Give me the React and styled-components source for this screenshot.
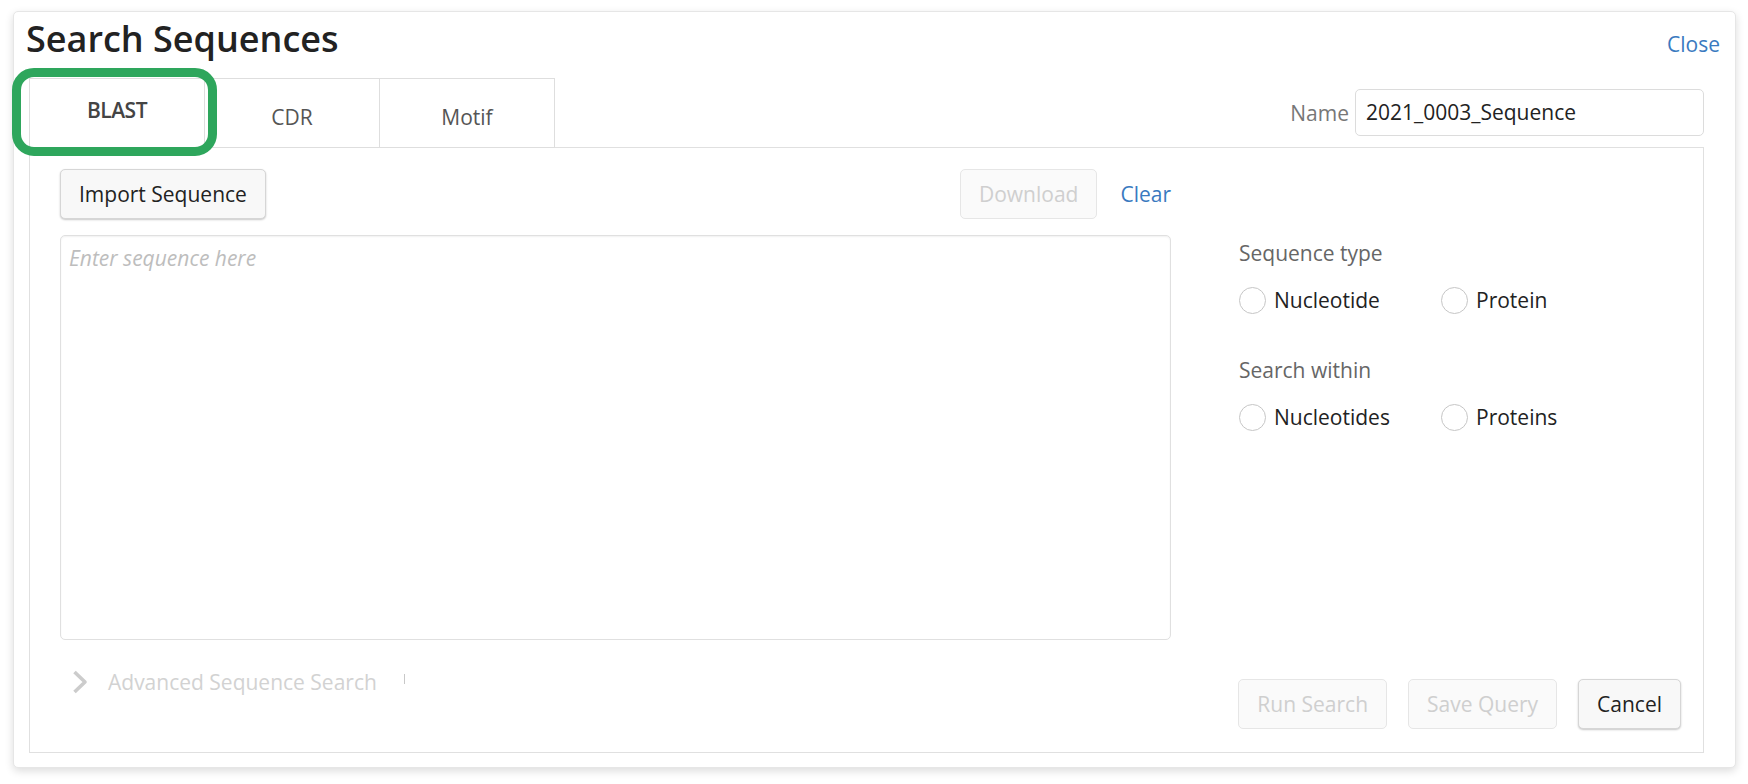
import React from "react";
import styled, { createGlobalStyle } from "styled-components";

const GlobalStyle = createGlobalStyle`
  html, body { margin: 0; padding: 0; background: #fff; }
  body { font-family: "Open Sans", "Noto Sans", sans-serif; color: #222; }
  * { box-sizing: border-box; }
`;

const Page = styled.div`
  padding: 11px 12px 16px 13px;
`;

const Card = styled.div`
  position: relative;
  height: 757px;
  border: 1px solid #e6e6e6;
  border-radius: 5px;
  background: #fff;
  box-shadow: 0 3px 8px rgba(0, 0, 0, 0.14);
  padding: 6px 15px 0 15px;
  display: flex;
  flex-direction: column;
`;

const Header = styled.div`
  display: flex;
  justify-content: space-between;
  align-items: baseline;
`;

const Title = styled.h1`
  margin: 0 0 0 -3px;
  font-size: 36px;
  line-height: 42px;
  font-weight: 600;
  color: #222;
`;

const LinkButton = styled.a`
  font-size: 21px;
  line-height: 28px;
  color: #3a7abf;
  cursor: pointer;
  text-decoration: none;
  white-space: nowrap;
`;

const TabRow = styled.div`
  display: flex;
  align-items: flex-end;
  margin-top: 18px;
  margin-right: 16px;
  margin-bottom: -1px;
  position: relative;
  z-index: 1;
`;

const Tab = styled.div`
  position: relative;
  z-index: ${(p) => (p.$active ? 2 : 1)};
  width: 176px;
  height: 70px;
  margin-left: ${(p) => (p.$first ? "0" : "-1px")};
  border: 1px solid #dedede;
  border-bottom-color: ${(p) => (p.$active ? "#fff" : "#dedede")};
  background: #fff;
  display: flex;
  align-items: center;
  justify-content: center;
  padding: ${(p) => (p.$active ? "0 0 7px 0" : "7px 0 0 0")};
  font-size: 21px;
  font-weight: ${(p) => (p.$active ? 600 : 400)};
  letter-spacing: ${(p) => (p.$active ? "-0.5px" : "0")};
  color: ${(p) => (p.$active ? "#444" : "#555")};
  cursor: pointer;
`;

const Highlight = styled.span`
  position: absolute;
  left: -18px;
  top: -11px;
  width: 205px;
  height: 88px;
  border: 9px solid #2ea65c;
  border-radius: 22px;
  pointer-events: none;
`;

const Spacer = styled.div`
  flex: 1;
`;

const NameGroup = styled.div`
  display: flex;
  align-items: center;
  gap: 6px;
  margin-bottom: 12px;
`;

const NameLabel = styled.label`
  font-size: 21px;
  color: #777;
`;

const NameInput = styled.input`
  width: 349px;
  height: 47px;
  border: 1px solid #dcdcdc;
  border-radius: 5px;
  padding: 0 10px 2px;
  font-family: inherit;
  font-size: 21px;
  color: #222;
  outline: none;
`;

const Panel = styled.div`
  flex: 1;
  margin-right: 16px;
  margin-bottom: 14px;
  border: 1px solid #e0e0e0;
  display: flex;
  padding: 21px 22px 23px 30px;
`;

const LeftColumn = styled.div`
  width: 1111px;
  flex-shrink: 0;
  display: flex;
  flex-direction: column;
`;

const Toolbar = styled.div`
  display: flex;
  align-items: center;
  height: 50px;
`;

const Button = styled.button`
  flex-shrink: 0;
  height: 50px;
  padding: 0 18px;
  white-space: nowrap;
  border: 1px solid ${(p) => (p.disabled ? "#e6e6e6" : "#d6d6d6")};
  border-radius: 5px;
  background: ${(p) => (p.disabled ? "#fafafa" : "#f8f8f8")};
  color: ${(p) => (p.disabled ? "#cfcfcf" : "#222")};
  box-shadow: ${(p) => (p.disabled ? "none" : "0 1px 2px rgba(0,0,0,0.22)")};
  font-family: inherit;
  font-size: 21px;
  cursor: ${(p) => (p.disabled ? "default" : "pointer")};
  margin-left: ${(p) => (p.$pushRight ? "auto" : "0")};
`;

const ClearLink = styled(LinkButton)`
  margin-left: 23px;
`;

const SequenceArea = styled.textarea`
  margin-top: 16px;
  height: 405px;
  width: 100%;
  border: 1px solid #e0e0e0;
  border-radius: 5px;
  box-shadow: inset 0 1px 2px rgba(0, 0, 0, 0.06);
  padding: 8px 8px;
  font-family: inherit;
  font-size: 21px;
  line-height: 28px;
  resize: none;
  outline: none;
  &::placeholder {
    color: #bdbdbd;
    font-style: italic;
  }
`;

const Advanced = styled.div`
  margin-top: 28px;
  height: 28px;
  display: flex;
  align-items: center;
  padding-left: 12px;
  font-size: 21px;
  color: #d2d2d2;
`;

const AdvancedText = styled.span`
  margin-left: 20px;
`;

const InfoMark = styled.span`
  width: 1px;
  height: 10px;
  background: #c8c8c8;
  margin-left: 27px;
  margin-bottom: 6px;
`;

const RightColumn = styled.div`
  flex: 1;
  min-width: 0;
  margin-left: 68px;
  display: flex;
  flex-direction: column;
`;

const FieldLabel = styled.div`
  margin-top: ${(p) => p.$top}px;
  font-size: 21px;
  line-height: 28px;
  color: #666;
`;

const RadioRow = styled.div`
  margin-top: 19px;
  height: 28px;
  display: flex;
  align-items: center;
`;

const RadioOption = styled.label`
  width: 202px;
  display: flex;
  align-items: center;
  gap: 8px;
  font-size: 21px;
  color: #222;
  cursor: pointer;
`;

const RadioCircle = styled.span`
  width: 27px;
  height: 27px;
  border: 1px solid #c6c6c6;
  border-radius: 50%;
  background: #fff;
`;

const Footer = styled.div`
  margin-top: auto;
  display: flex;
  justify-content: flex-end;
  gap: 21px;
`;

const Radio = ({ children }) => (
  <RadioOption>
    <RadioCircle />
    {children}
  </RadioOption>
);

export default function App() {
  return (
    <Page>
      <GlobalStyle />
      <Card>
        <Header>
          <Title>Search Sequences</Title>
          <LinkButton>Close</LinkButton>
        </Header>
        <TabRow>
          <Tab $first $active>
            BLAST
            <Highlight />
          </Tab>
          <Tab>CDR</Tab>
          <Tab>Motif</Tab>
          <Spacer />
          <NameGroup>
            <NameLabel>Name</NameLabel>
            <NameInput defaultValue="2021_0003_Sequence" />
          </NameGroup>
        </TabRow>
        <Panel>
          <LeftColumn>
            <Toolbar>
              <Button>Import Sequence</Button>
              <Button disabled $pushRight>
                Download
              </Button>
              <ClearLink>Clear</ClearLink>
            </Toolbar>
            <SequenceArea placeholder="Enter sequence here" />
            <Advanced>
              <svg width="16" height="24" viewBox="0 0 16 24">
                <path
                  d="M2.5 2 L13 12 L2.5 22"
                  fill="none"
                  stroke="#cccccc"
                  strokeWidth="3.6"
                  strokeLinejoin="round"
                />
              </svg>
              <AdvancedText>Advanced Sequence Search</AdvancedText>
              <InfoMark />
            </Advanced>
          </LeftColumn>
          <RightColumn>
            <FieldLabel $top={70}>Sequence type</FieldLabel>
            <RadioRow>
              <Radio>Nucleotide</Radio>
              <Radio>Protein</Radio>
            </RadioRow>
            <FieldLabel $top={42}>Search within</FieldLabel>
            <RadioRow>
              <Radio>Nucleotides</Radio>
              <Radio>Proteins</Radio>
            </RadioRow>
            <Footer>
              <Button disabled>Run Search</Button>
              <Button disabled>Save Query</Button>
              <Button>Cancel</Button>
            </Footer>
          </RightColumn>
        </Panel>
      </Card>
    </Page>
  );
}
